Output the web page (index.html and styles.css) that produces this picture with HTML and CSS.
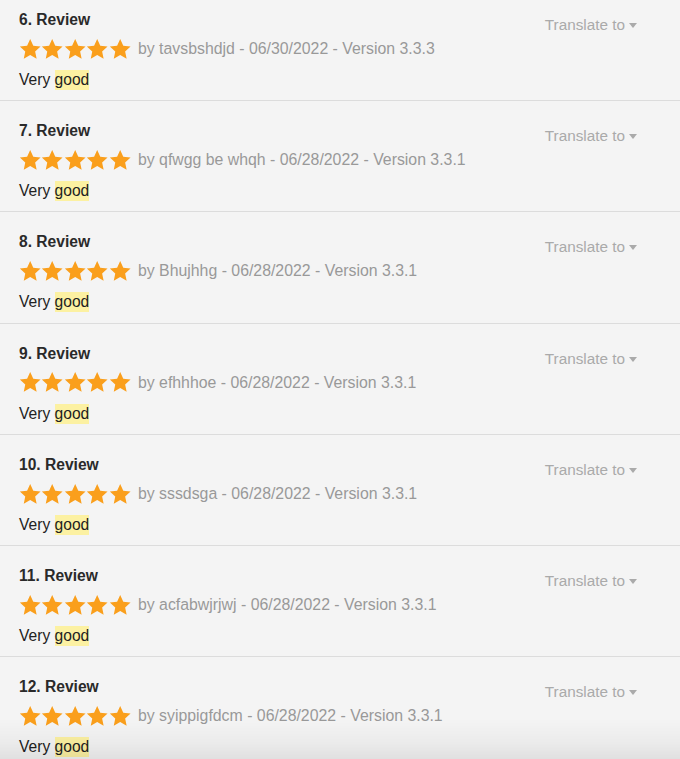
FILE: index.html
```html
<!DOCTYPE html>
<html>
<head>
<meta charset="utf-8">
<link rel="stylesheet" href="styles.css">
</head>
<body>
<svg width="0" height="0" class="defs">
  <defs>
    <symbol id="star" viewBox="0 0 24 24">
      <path d="M12 1.2l3.3 7.1 7.8.9-5.8 5.3 1.6 7.7L12 18.3l-6.9 3.9 1.6-7.7L.9 9.2l7.8-.9z"/>
    </symbol>
  </defs>
</svg>
<div class="reviews">
  <div class="review">
    <div class="head"><div class="title">6. Review</div><div class="translate">Translate to <span class="caret"></span></div></div>
    <div class="meta"><span class="stars"><svg><use href="#star"/></svg><svg><use href="#star"/></svg><svg><use href="#star"/></svg><svg><use href="#star"/></svg><svg><use href="#star"/></svg></span><span class="by">by tavsbshdjd - 06/30/2022 - Version 3.3.3</span></div>
    <div class="body">Very <mark>good</mark></div>
  </div>
  <div class="review">
    <div class="head"><div class="title">7. Review</div><div class="translate">Translate to <span class="caret"></span></div></div>
    <div class="meta"><span class="stars"><svg><use href="#star"/></svg><svg><use href="#star"/></svg><svg><use href="#star"/></svg><svg><use href="#star"/></svg><svg><use href="#star"/></svg></span><span class="by">by qfwgg be whqh - 06/28/2022 - Version 3.3.1</span></div>
    <div class="body">Very <mark>good</mark></div>
  </div>
  <div class="review">
    <div class="head"><div class="title">8. Review</div><div class="translate">Translate to <span class="caret"></span></div></div>
    <div class="meta"><span class="stars"><svg><use href="#star"/></svg><svg><use href="#star"/></svg><svg><use href="#star"/></svg><svg><use href="#star"/></svg><svg><use href="#star"/></svg></span><span class="by">by Bhujhhg - 06/28/2022 - Version 3.3.1</span></div>
    <div class="body">Very <mark>good</mark></div>
  </div>
  <div class="review">
    <div class="head"><div class="title">9. Review</div><div class="translate">Translate to <span class="caret"></span></div></div>
    <div class="meta"><span class="stars"><svg><use href="#star"/></svg><svg><use href="#star"/></svg><svg><use href="#star"/></svg><svg><use href="#star"/></svg><svg><use href="#star"/></svg></span><span class="by">by efhhhoe - 06/28/2022 - Version 3.3.1</span></div>
    <div class="body">Very <mark>good</mark></div>
  </div>
  <div class="review">
    <div class="head"><div class="title">10. Review</div><div class="translate">Translate to <span class="caret"></span></div></div>
    <div class="meta"><span class="stars"><svg><use href="#star"/></svg><svg><use href="#star"/></svg><svg><use href="#star"/></svg><svg><use href="#star"/></svg><svg><use href="#star"/></svg></span><span class="by">by sssdsga - 06/28/2022 - Version 3.3.1</span></div>
    <div class="body">Very <mark>good</mark></div>
  </div>
  <div class="review">
    <div class="head"><div class="title">11. Review</div><div class="translate">Translate to <span class="caret"></span></div></div>
    <div class="meta"><span class="stars"><svg><use href="#star"/></svg><svg><use href="#star"/></svg><svg><use href="#star"/></svg><svg><use href="#star"/></svg><svg><use href="#star"/></svg></span><span class="by">by acfabwjrjwj - 06/28/2022 - Version 3.3.1</span></div>
    <div class="body">Very <mark>good</mark></div>
  </div>
  <div class="review">
    <div class="head"><div class="title">12. Review</div><div class="translate">Translate to <span class="caret"></span></div></div>
    <div class="meta"><span class="stars"><svg><use href="#star"/></svg><svg><use href="#star"/></svg><svg><use href="#star"/></svg><svg><use href="#star"/></svg><svg><use href="#star"/></svg></span><span class="by">by syippigfdcm - 06/28/2022 - Version 3.3.1</span></div>
    <div class="body">Very <mark>good</mark></div>
  </div>
</div>
<div class="fade"></div>
</body>
</html>
```
FILE: styles.css
```css
html, body {
  margin: 0;
  padding: 0;
  background: #f4f4f4;
  font-family: "Liberation Sans", Arial, sans-serif;
  font-size: 15px;
  color: #222;
  overflow: hidden;
  height: 759px;
}
.defs { position: absolute; }
.reviews {
  margin-top: -10px;
}
.review {
  padding: 20px 43px 10.2px 19px;
  border-bottom: 1px solid #dcdcdc;
}
.head {
  display: flex;
  justify-content: space-between;
  align-items: flex-start;
  height: 20px;
}
.title {
  font-weight: bold;
  font-size: 15.6px;
  line-height: 20px;
  color: #2a2a2a;
}
.translate {
  color: #aaaaaa;
  font-size: 15.3px;
  line-height: 20px;
  margin-top: 5px;
  display: flex;
  align-items: center;
}
.caret {
  display: inline-block;
  width: 0;
  height: 0;
  margin-left: 4px;
  border-left: 4.5px solid transparent;
  border-right: 4.5px solid transparent;
  border-top: 5px solid #aaaaaa;
  margin-top: 1px;
}
.meta {
  margin-top: 7px;
  height: 24px;
  display: flex;
  align-items: center;
}
.stars {
  display: flex;
  margin-right: 7px;
}
.stars svg {
  width: 22.4px;
  height: 22.4px;
  fill: #fa9f1c;
}
.by {
  color: #999999;
  font-size: 15.85px;
  line-height: 20px;
}
.body {
  margin-top: 9px;
  font-size: 15.6px;
  line-height: 20px;
  color: #222;
}
mark {
  background: #fcf1a2;
  color: #222;
  padding: 1px 0 2px;
}
.fade {
  position: fixed;
  left: 0;
  right: 0;
  bottom: 0;
  height: 40px;
  pointer-events: none;
  background: linear-gradient(to bottom, rgba(0,0,0,0) 0%, rgba(0,0,0,0.035) 60%, rgba(0,0,0,0.08) 100%);
}
```
